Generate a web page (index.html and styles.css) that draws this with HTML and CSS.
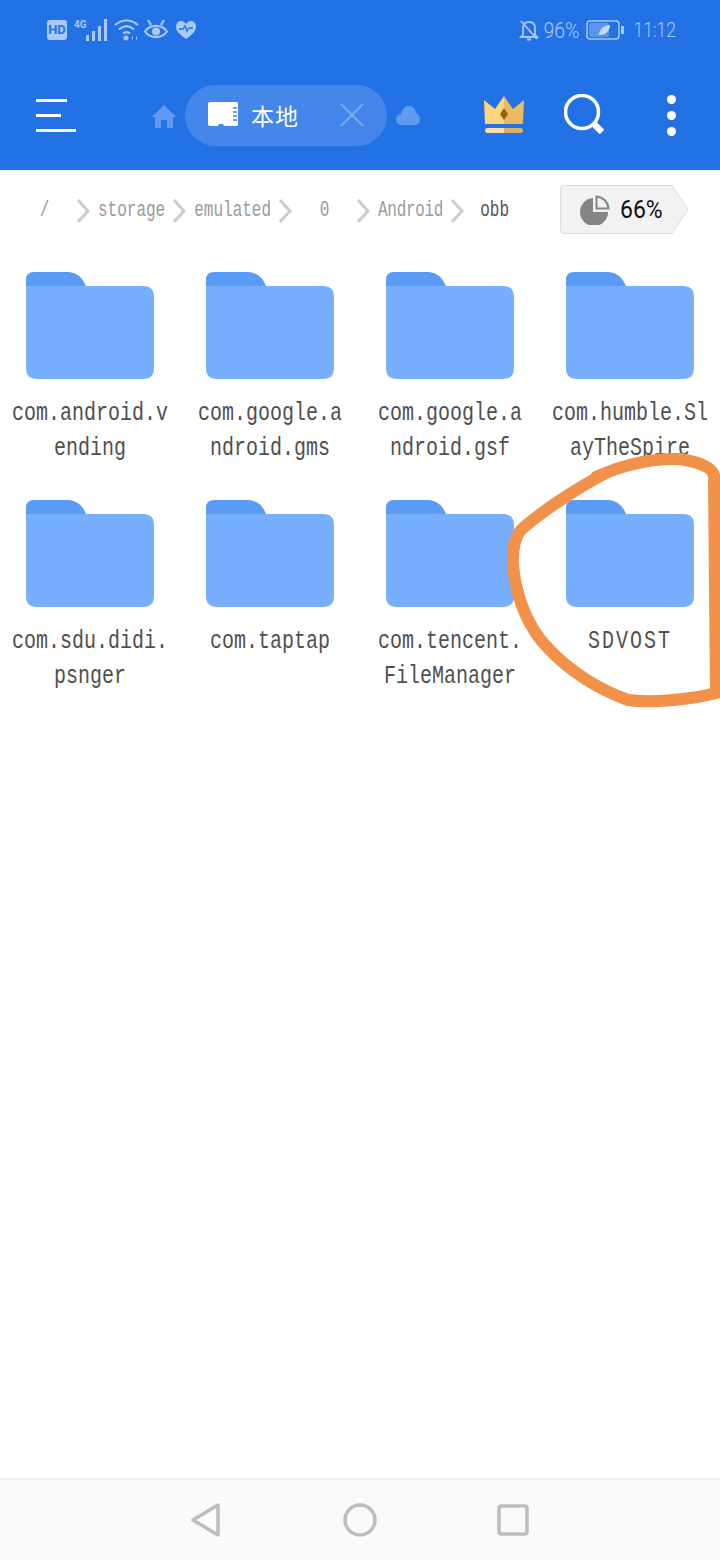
FILE: index.html
```html
<!DOCTYPE html>
<html lang="en">
<head>
    <meta charset="UTF-8" />
    <meta name="viewport" content="width=device-width, initial-scale=1.0" />
    <title>Files</title>
    <link rel="stylesheet" href="styles.css">
</head>
<body>
    <header class="header">
        <div class="status-bar">
            <div class="status-left">
                <span class="hd">HD</span>
                <span class="net">4G</span>
                <svg class="signal" width="22" height="22" viewBox="0 0 22 22"><path d="M0 16h3v6H0zM6 12h3v10H6zM12 7h3v15h-3zM18 0h3v22h-3z"/></svg>
                <svg class="wifi" width="25" height="22" viewBox="0 0 25 22"><path d="M1 6C8 0 17 0 24 6M5 10.500C10 6 15 6 20 10.500M9 14.500C11 13 14 13 16 14.500" fill="none" stroke-width="2.200"/><circle cx="12" cy="19" r="2.500" stroke="none"/><path d="M18 19h1M22 19h1" stroke-width="3" fill="none"/></svg>
                <svg class="eye" width="24" height="22" viewBox="0 0 24 22"><path d="M1 12.500C6 5 18 5 23 12.500C18 20 6 20 1 12.500Z" fill="none" stroke-width="2.200"/><circle cx="12" cy="12.500" r="4" stroke="none"/><path d="M4 1l3 5M20 1l-3 5" fill="none" stroke-width="2.200"/></svg>
                <svg class="heart" width="22" height="20" viewBox="0 0 22 20"><path class="fill" d="M11 19C4 14 1 11 1 6.500C1 3 3.500 1 6 1C8 1 10 2 11 4C12 2 14 1 16 1C18.500 1 21 3 21 6.500C21 11 18 14 11 19Z"/><path class="pulse" d="M4 9h4l2-3 2 5 2-3h4" fill="none" stroke-width="1.300"/></svg>
            </div>
            <div class="status-right">
                <svg class="bell" width="20" height="22" viewBox="0 0 20 22"><path d="M4 16V9C4 5 6.500 3 10 3C13.500 3 16 5 16 9V16L18 18H2ZM8 20.500H12M2 2L18 20" fill="none" stroke-width="1.800"/></svg>
                <span class="pct">96%</span>
                <svg class="battery" width="38" height="20" viewBox="0 0 38 20"><rect x="1" y="1" width="32" height="18" rx="3" fill="none" stroke-width="1.500"/><rect x="3" y="3" width="20" height="14" rx="1.500" class="level" stroke="none"/><path d="M35 6h3v8h-3z" stroke="none"/><path class="leaf" d="M13 15C13 9 18 5 24 5C24 11 20 15 13 15Z" stroke="none"/></svg>
                <span class="time">11:12</span>
            </div>
        </div>
        <div class="toolbar">
            <div class="menu">
                <span class="line-a"></span>
                <span class="line-b"></span>
                <span class="line-c"></span>
            </div>
            <svg class="home" width="24" height="24" viewBox="0 0 24 24"><path d="M12 1L24 13H21V24H15V16H9V24H3V13H0Z"/></svg>
            <div class="tab">
                <svg class="sd" width="30" height="25" viewBox="0 0 30 25"><path d="M2 0H28Q30 0 30 2V23Q30 24 28 24H16L15 22H11L10 24H2Q0 24 0 22V2Q0 0 2 0Z" fill="#fff"/><path d="M25 5h4v2h-4zM25 9h4v2h-4zM25 13h4v2h-4zM25 17h4v2h-4z" fill="#6f9fe8"/></svg>
                <span class="tab-name">本地</span>
                <svg class="close" width="24" height="24" viewBox="0 0 24 24"><path d="M1 1L23 23M23 1L1 23" stroke="#7aa9f0" stroke-width="2" fill="none"/></svg>
            </div>
            <svg class="cloud" width="24" height="19" viewBox="0 0 24 19"><path d="M6 19C2 19 0 16.500 0 13.500C0 10.500 2 8.500 5 8C6 3 9.500 0 13 0C17 0 19.500 3 20 7C22.500 8 24 10.500 24 13.500C24 16.500 22 19 18.500 19Z"/></svg>
            <svg class="crown" width="40" height="37" viewBox="0 0 40 37">
                <path d="M0 4L11 13L20 0V28H1Z" fill="#fad67f"/>
                <path d="M40 4L29 13L20 0V28H39Z" fill="#e6bb62"/>
                <path d="M20 12L24 18L20 24L16 18Z" fill="#9a5f0c"/>
                <path d="M3 32H20V37H3Q1 37 1 34.500Q1 32 3 32Z" fill="#f6dfa8"/>
                <path d="M20 32H37Q39 32 39 34.500Q39 37 37 37H20Z" fill="#d8b26a"/>
            </svg>
            <svg class="search" width="40" height="40" viewBox="0 0 40 40"><circle cx="18" cy="18" r="16.500" fill="none" stroke="#fff" stroke-width="3.500"/><path d="M29 29L38 38" stroke="#fff" stroke-width="6.500"/></svg>
            <div class="more">
                <span></span>
                <span></span>
                <span></span>
            </div>
        </div>
    </header>

    <nav class="crumbs">
        <span class="crumb"><span class="tall">/</span></span>
        <svg class="chevron" width="13" height="26" viewBox="0 0 13 26"><path d="M1 2L11 13L1 24" /></svg>
        <span class="crumb"><span class="tall">storage</span></span>
        <svg class="chevron" width="13" height="26" viewBox="0 0 13 26"><path d="M1 2L11 13L1 24" /></svg>
        <span class="crumb"><span class="tall">emulated</span></span>
        <svg class="chevron" width="13" height="26" viewBox="0 0 13 26"><path d="M1 2L11 13L1 24" /></svg>
        <span class="crumb"><span class="tall">0</span></span>
        <svg class="chevron" width="13" height="26" viewBox="0 0 13 26"><path d="M1 2L11 13L1 24" /></svg>
        <span class="crumb short"><span class="tall">Android</span></span>
        <svg class="chevron" width="13" height="26" viewBox="0 0 13 26"><path d="M1 2L11 13L1 24" /></svg>
        <span class="crumb current"><span class="tall">obb</span></span>
        <div class="usage">
            <svg class="usage-bg" width="129" height="49" viewBox="0 0 129 49"><path d="M4 .5H112L128 24.500L112 48.500H4Q.5 48.500 .5 45V4Q.5 .5 4 .5Z" fill="#f2f2f2" stroke="#dcdcdc"/></svg>
            <svg class="pie" width="30" height="30" viewBox="0 0 30 30"><path d="M13 3V17H28A14 14 0 1 1 13 3Z" fill="#858585"/><path d="M16.500 1.500A13 13 0 0 1 28.500 13.500H16.500Z" fill="#f2f2f2" stroke="#858585" stroke-width="2"/></svg>
            <span class="usage-pct">66%</span>
        </div>
    </nav>

    <main class="grid">
        <div class="item">
            <svg class="folder" width="128" height="107" viewBox="0 0 128 107"><path class="folder-tab" d="M0 14V8Q0 0 8 0H43Q55 1 60 14Z"/><path class="folder-body" d="M0 14H117Q128 14 128 25V96Q128 107 117 107H11Q0 107 0 96Z"/></svg>
            <div class="label">com.android.v<br>ending</div>
        </div>
        <div class="item">
            <svg class="folder" width="128" height="107" viewBox="0 0 128 107"><path class="folder-tab" d="M0 14V8Q0 0 8 0H43Q55 1 60 14Z"/><path class="folder-body" d="M0 14H117Q128 14 128 25V96Q128 107 117 107H11Q0 107 0 96Z"/></svg>
            <div class="label">com.google.a<br>ndroid.gms</div>
        </div>
        <div class="item">
            <svg class="folder" width="128" height="107" viewBox="0 0 128 107"><path class="folder-tab" d="M0 14V8Q0 0 8 0H43Q55 1 60 14Z"/><path class="folder-body" d="M0 14H117Q128 14 128 25V96Q128 107 117 107H11Q0 107 0 96Z"/></svg>
            <div class="label">com.google.a<br>ndroid.gsf</div>
        </div>
        <div class="item">
            <svg class="folder" width="128" height="107" viewBox="0 0 128 107"><path class="folder-tab" d="M0 14V8Q0 0 8 0H43Q55 1 60 14Z"/><path class="folder-body" d="M0 14H117Q128 14 128 25V96Q128 107 117 107H11Q0 107 0 96Z"/></svg>
            <div class="label">com.humble.Sl<br>ayTheSpire</div>
        </div>
        <div class="item">
            <svg class="folder" width="128" height="107" viewBox="0 0 128 107"><path class="folder-tab" d="M0 14V8Q0 0 8 0H43Q55 1 60 14Z"/><path class="folder-body" d="M0 14H117Q128 14 128 25V96Q128 107 117 107H11Q0 107 0 96Z"/></svg>
            <div class="label">com.sdu.didi.<br>psnger</div>
        </div>
        <div class="item">
            <svg class="folder" width="128" height="107" viewBox="0 0 128 107"><path class="folder-tab" d="M0 14V8Q0 0 8 0H43Q55 1 60 14Z"/><path class="folder-body" d="M0 14H117Q128 14 128 25V96Q128 107 117 107H11Q0 107 0 96Z"/></svg>
            <div class="label">com.taptap</div>
        </div>
        <div class="item">
            <svg class="folder" width="128" height="107" viewBox="0 0 128 107"><path class="folder-tab" d="M0 14V8Q0 0 8 0H43Q55 1 60 14Z"/><path class="folder-body" d="M0 14H117Q128 14 128 25V96Q128 107 117 107H11Q0 107 0 96Z"/></svg>
            <div class="label">com.tencent.<br>FileManager</div>
        </div>
        <div class="item">
            <svg class="folder" width="128" height="107" viewBox="0 0 128 107"><path class="folder-tab" d="M0 14V8Q0 0 8 0H43Q55 1 60 14Z"/><path class="folder-body" d="M0 14H117Q128 14 128 25V96Q128 107 117 107H11Q0 107 0 96Z"/></svg>
            <div class="label caps">SDVOST</div>
        </div>
    </main>

    <nav class="nav-bar">
        <svg class="nav-back" width="30" height="34" viewBox="0 0 30 34"><path d="M27 2V32L2 17Z"/></svg>
        <svg class="nav-home" width="34" height="34" viewBox="0 0 34 34"><circle cx="17" cy="17" r="15"/></svg>
        <svg class="nav-recent" width="32" height="32" viewBox="0 0 32 32"><rect x="2" y="2" width="28" height="28" rx="2"/></svg>
    </nav>

    <!-- hand drawn mark on top of the screenshot -->
    <svg class="scribble" width="720" height="1560" viewBox="0 0 720 1560"><path d="M604 474C585 484 550 505 523 528C515 535 512 550 513 565C516 600 530 630 548 648C570 672 600 690 628 700C650 703 690 700 716 693L714 480C716 470 705 463 680 459C650 458 620 466 596 477"/></svg>
</body>
</html>
```
FILE: styles.css
```css
body {
    margin: 0;
    width: 720px;
    height: 1560px;
    display: flex;
    flex-direction: column;
    background: #fff;
    font-family: "Liberation Mono", monospace;
    overflow: hidden;
}
.header {
    height: 170px;
    background: #2272e6;
    flex-shrink: 0;
}
.status-bar {
    height: 60px;
    display: flex;
    align-items: center;
    justify-content: space-between;
    padding: 0 44px 0 47px;
    color: #a9c8f6;
    font-family: Roboto, sans-serif;
}
.status-bar svg {
    fill: #a9c8f6;
    stroke: #a9c8f6;
}
.status-left,
.status-right {
    display: flex;
    align-items: center;
}
.hd {
    width: 20px;
    height: 20px;
    border-radius: 3px;
    background: #a9c8f6;
    color: #2272e6;
    font-size: 13px;
    font-weight: 700;
    line-height: 20px;
    text-align: center;
}
.net {
    font-size: 10px;
    font-weight: 700;
    margin: -12px 0 0 7px;
    width: 12px;
}
.signal {
    stroke: none !important;
}
.wifi {
    margin-left: 6px;
}
.eye {
    margin-left: 5px;
}
.heart {
    margin-left: 7px;
    stroke: none !important;
}
.heart .pulse {
    stroke: #2272e6;
}
.pct {
    font-size: 19.500px;
    font-weight: 300;
    margin-left: 4px;
    transform: scaleY(1.1);
}
.battery {
    margin-left: 7px;
}
.battery .level {
    fill: #5a93eb;
}
.battery .leaf {
    fill: #c6daf8;
}
.time {
    font-size: 17.500px;
    font-weight: 300;
    margin-left: 9px;
    transform: scaleY(1.2);
}
.toolbar {
    height: 110px;
    display: flex;
    align-items: center;
    padding-left: 36px;
}
.menu {
    width: 40px;
    display: flex;
    flex-direction: column;
    gap: 12px;
}
.menu span {
    display: block;
    height: 3px;
    background: #fff;
}
.menu .line-a {
    width: 31px;
}
.menu .line-b {
    width: 25px;
}
.menu .line-c {
    width: 40px;
}
.home {
    fill: #5f9bf0;
    margin: 2px 0 0 76px;
}
.tab {
    width: 202px;
    height: 61px;
    margin-left: 9px;
    box-sizing: border-box;
    padding-left: 23px;
    border-radius: 31px;
    background: #4486e9;
    display: flex;
    align-items: center;
}
.sd {
    margin-top: -2px;
}
.tab-name {
    color: #fff;
    font-family: "Noto Sans CJK SC", sans-serif;
    font-size: 23px;
    letter-spacing: 1px;
    margin-left: 13px;
}
.close {
    margin-left: 41px;
}
.cloud {
    fill: #5f9bf0;
    margin-left: 9px;
}
.crown {
    margin: -2px 0 0 64px;
}
.search {
    margin: -3px 0 0 40px;
}
.more {
    display: flex;
    flex-direction: column;
    gap: 7px;
    margin: 0 0 0 63px;
}
.more span {
    display: block;
    width: 9px;
    height: 9px;
    border-radius: 50%;
    background: #fff;
}
.crumbs {
    height: 80px;
    flex-shrink: 0;
    box-sizing: border-box;
    border-top: 1px solid #e8f5fe;
    display: flex;
    align-items: center;
    padding: 1px 0 0 12px;
    color: #9a9a9a;
    font-size: 16px;
}
.crumb {
    min-width: 65px;
    box-sizing: border-box;
    padding: 0 8px;
    text-align: center;
}
.crumb.short {
    letter-spacing: -0.3px;
}
.crumb.current {
    color: #555;
    margin-left: -2px;
}
.tall {
    display: inline-block;
    transform: scaleY(1.35);
}
.chevron {
    fill: none;
    stroke: #cdcdcd;
    stroke-width: 3;
    flex-shrink: 0;
}
.usage {
    position: relative;
    width: 129px;
    height: 49px;
    margin: -3px 31px 0 auto;
    display: flex;
    align-items: center;
    padding-left: 20px;
    box-sizing: border-box;
}
.usage-bg {
    position: absolute;
    left: 0;
    top: 0;
}
.pie,
.usage-pct {
    position: relative;
}
.usage-pct {
    margin-left: 10px;
    color: #111;
    font-family: Roboto, sans-serif;
    font-size: 23px;
    transform: scaleY(1.1);
}
.grid {
    flex: 1;
    display: grid;
    grid-template-columns: repeat(4, 180px);
    grid-auto-rows: 228px;
    padding-top: 22px;
}
.item {
    display: flex;
    flex-direction: column;
    align-items: center;
}
.folder {
    flex-shrink: 0;
}
.folder-tab {
    fill: #5a9bf5;
}
.folder-body {
    fill: #77aefe;
}
.label {
    width: 160px;
    margin-top: 16px;
    color: #505050;
    font-size: 20px;
    line-height: 27px;
    text-align: center;
    transform: scaleY(1.3);
    transform-origin: top;
}
.label.caps {
    letter-spacing: 2px;
}
.nav-bar {
    height: 82px;
    flex-shrink: 0;
    box-sizing: border-box;
    border-top: 2px solid #f1f1f1;
    background: #fafafa;
    display: flex;
    align-items: center;
    padding-left: 191px;
}
.nav-bar svg {
    fill: none;
    stroke: #bdbdbd;
    stroke-width: 3.500;
    stroke-linejoin: round;
}
.nav-home {
    margin-left: 122px;
}
.nav-recent {
    margin-left: 120px;
}
.scribble {
    position: absolute;
    left: 0;
    top: 0;
    pointer-events: none;
}
.scribble path {
    fill: none;
    stroke: #f2914a;
    stroke-width: 12;
    stroke-linecap: round;
    stroke-linejoin: round;
}
```
